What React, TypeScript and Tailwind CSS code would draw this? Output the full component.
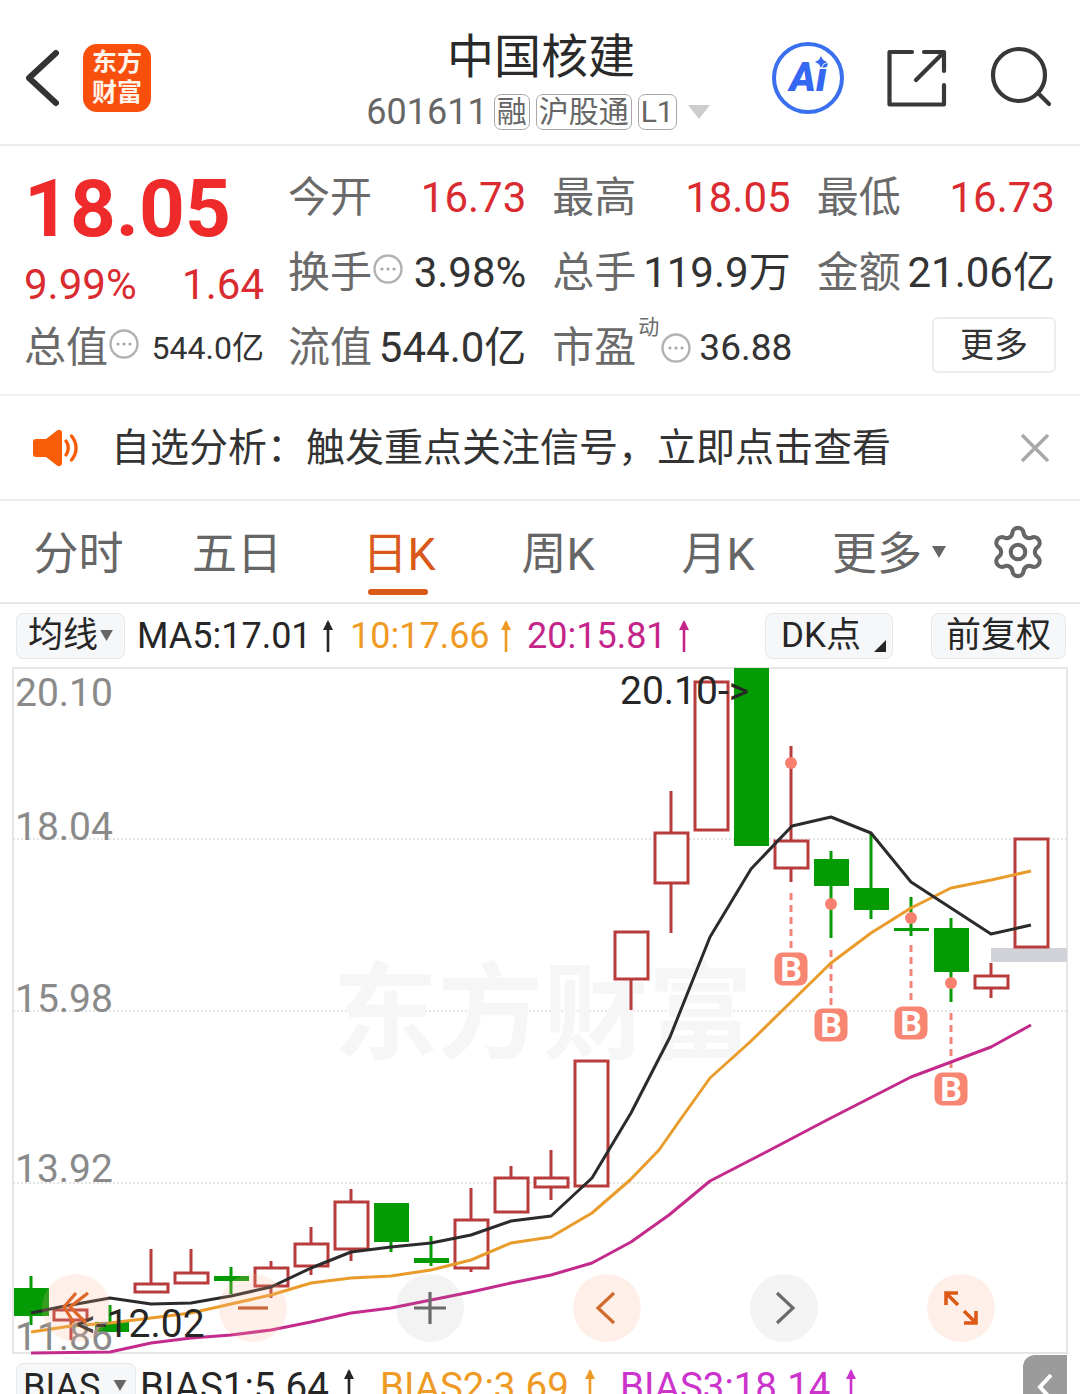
import { Settings } from "lucide-react";

type C = { x0: number; x1: number; top: number; bot: number; hi?: number; lo?: number; wx: number; up: boolean };

const candles: C[] = [
  { x0: 14, x1: 49, top: 1288, bot: 1316, hi: 1276, lo: 1325, wx: 31, up: false },
  { x0: 53, x1: 88, top: 1309, bot: 1321, lo: 1340, wx: 71, up: true },
  { x0: 95, x1: 129, top: 1322, bot: 1332, hi: 1305, wx: 110, up: false },
  { x0: 134, x1: 169, top: 1283, bot: 1293, hi: 1249, wx: 151, up: true },
  { x0: 174, x1: 209, top: 1272, bot: 1284, hi: 1249, wx: 191, up: true },
  { x0: 214, x1: 249, top: 1276, bot: 1281, hi: 1267, lo: 1294, wx: 231, up: false },
  { x0: 254, x1: 289, top: 1267, bot: 1287, hi: 1261, lo: 1298, wx: 271, up: true },
  { x0: 294, x1: 329, top: 1243, bot: 1267, hi: 1227, lo: 1275, wx: 311, up: true },
  { x0: 334, x1: 369, top: 1201, bot: 1250, hi: 1189, lo: 1261, wx: 351, up: true },
  { x0: 374, x1: 409, top: 1203, bot: 1242, lo: 1252, wx: 391, up: false },
  { x0: 414, x1: 449, top: 1258, bot: 1263, hi: 1236, lo: 1266, wx: 431, up: false },
  { x0: 454, x1: 489, top: 1219, bot: 1269, hi: 1188, lo: 1272, wx: 471, up: true },
  { x0: 494, x1: 529, top: 1177, bot: 1213, hi: 1166, wx: 511, up: true },
  { x0: 534, x1: 569, top: 1177, bot: 1188, hi: 1150, lo: 1200, wx: 551, up: true },
  { x0: 574, x1: 609, top: 1060, bot: 1187, wx: 591, up: true },
  { x0: 614, x1: 649, top: 931, bot: 980, lo: 1010, wx: 631, up: true },
  { x0: 654, x1: 689, top: 832, bot: 884, hi: 791, lo: 933, wx: 671, up: true },
  { x0: 694, x1: 729, top: 681, bot: 831, wx: 711, up: true },
  { x0: 734, x1: 769, top: 668, bot: 846, wx: 751, up: false },
  { x0: 774, x1: 809, top: 840, bot: 869, hi: 746, lo: 882, wx: 791, up: true },
  { x0: 814, x1: 849, top: 859, bot: 886, hi: 851, lo: 938, wx: 831, up: false },
  { x0: 854, x1: 889, top: 888, bot: 910, hi: 833, lo: 919, wx: 871, up: false },
  { x0: 894, x1: 929, top: 928, bot: 931, hi: 897, lo: 936, wx: 911, up: false },
  { x0: 934, x1: 969, top: 928, bot: 972, hi: 918, lo: 1002, wx: 951, up: false },
  { x0: 974, x1: 1009, top: 975, bot: 989, hi: 963, lo: 998, wx: 991, up: true },
  { x0: 1014, x1: 1049, top: 838, bot: 948, wx: 1031, up: true },
];

const ma5 = "31,1313 60,1307 110,1298 151,1304 191,1303 231,1296 271,1287 311,1268 351,1252 391,1247 431,1243 471,1235 511,1221 551,1216 592,1178 631,1113 670,1037 710,937 751,869 792,826 831,817 871,833 911,882 951,908 991,934 1031,925";
const ma10 = "31,1332 71,1326 110,1323 151,1318 191,1313 231,1304 271,1295 311,1283 351,1278 391,1276 431,1270 471,1260 511,1243 551,1237 592,1213 630,1180 659,1150 680,1120 710,1078 750,1042 791,1002 831,963 871,933 911,908 951,888 991,880 1031,871";
const ma20 = "31,1353 110,1352 151,1343 191,1338 231,1335 271,1330 311,1322 351,1313 391,1308 431,1300 471,1292 511,1283 551,1275 592,1263 631,1242 669,1215 710,1181 770,1150 827,1120 911,1077 951,1062 991,1047 1031,1025";

const marks = [
  { x: 791, dot: 763, d0: 893, d1: 950, b: 969 },
  { x: 831, dot: 904, d0: 950, d1: 1005, b: 1025 },
  { x: 911, dot: 918, d0: 945, d1: 1003, b: 1023 },
  { x: 951, dot: 983, d0: 1013, d1: 1070, b: 1089 },
];

const RED = "#b83c3c";
const GREEN = "#049b04";

function Chart() {
  return (
    <svg viewBox="12 667 1056 688" className="block h-[688px] w-[1056px]" fontFamily="Roboto, sans-serif">
      <rect x="13" y="668" width="1054" height="685" fill="none" stroke="#e6e6e6" strokeWidth="2" />
      {[839, 1011, 1183].map((y) => (
        <line key={y} x1="13" x2="1067" y1={y} y2={y} stroke="#dcdcdc" strokeWidth="1.5" strokeDasharray="2 2" />
      ))}
      <text x="333" y="1050" fontSize="105" fontWeight="700" fill="#f6f6f6" fontFamily="'Noto Sans CJK SC', sans-serif">
        东方财富
      </text>
      <rect x="991" y="948" width="76" height="14" fill="#d1d3d8" />
      {candles.map((c, i) => {
        const col = c.up ? RED : GREEN;
        return (
          <g key={i}>
            {c.hi !== undefined && <line x1={c.wx} x2={c.wx} y1={c.hi} y2={c.top} stroke={col} strokeWidth="3" />}
            {c.lo !== undefined && <line x1={c.wx} x2={c.wx} y1={c.bot} y2={c.lo} stroke={col} strokeWidth="3" />}
            {c.up ? (
              <rect x={c.x0 + 1} y={c.top + 1} width={c.x1 - c.x0 - 2} height={c.bot - c.top - 2} fill="#fff" stroke={col} strokeWidth="3" />
            ) : (
              <rect x={c.x0} y={c.top} width={c.x1 - c.x0} height={c.bot - c.top} fill={col} />
            )}
          </g>
        );
      })}
      {marks.map((m) => (
        <g key={m.x}>
          <circle cx={m.x} cy={m.dot} r="6" fill="#f8806f" />
          <line x1={m.x} x2={m.x} y1={m.d0} y2={m.d1} stroke="#f0847a" strokeWidth="3" strokeDasharray="7 5" />
        </g>
      ))}
      <polyline points={ma20} fill="none" stroke="#c42a8c" strokeWidth="3" strokeLinejoin="round" />
      <polyline points={ma10} fill="none" stroke="#e99c2c" strokeWidth="3" strokeLinejoin="round" />
      <polyline points={ma5} fill="none" stroke="#2b2b2b" strokeWidth="3" strokeLinejoin="round" />
      {marks.map((m) => (
        <g key={m.x}>
          <rect x={m.x - 16.5} y={m.b - 16.5} width="33" height="33" rx="8" fill="#f98672" />
          <text x={m.x} y={m.b + 12} textAnchor="middle" fontSize="34" fontWeight="700" fill="#fff">
            B
          </text>
        </g>
      ))}
      {[
        ["20.10", 706],
        ["18.04", 840],
        ["15.98", 1012],
        ["13.92", 1182],
        ["11.86", 1350],
      ].map(([t, y]) => (
        <text key={t} x="15" y={y} fontSize="39" fill="#8a8a8a">
          {t}
        </text>
      ))}
      <text x="620" y="704" fontSize="39" fill="#262626">
        20.10-&gt;
      </text>
      <text x="76" y="1337" fontSize="39" fill="#262626">
        &lt;-12.02
      </text>
    </svg>
  );
}

function Info({ x }: { x?: string }) {
  return (
    <svg viewBox="0 0 30 30" className={`h-[30px] w-[30px] shrink-0 ${x ?? ""}`}>
      <circle cx="15" cy="15" r="13.5" fill="none" stroke="#b2b2b2" strokeWidth="2.4" />
      <circle cx="9" cy="15" r="1.6" fill="#a8a8a8" />
      <circle cx="15" cy="15" r="1.6" fill="#a8a8a8" />
      <circle cx="21" cy="15" r="1.6" fill="#a8a8a8" />
    </svg>
  );
}

function Up({ c }: { c: string }) {
  return (
    <svg viewBox="0 0 14 34" className="h-[34px] w-[14px] shrink-0">
      <path d="M7 33V3" stroke={c} strokeWidth="2.6" fill="none" />
      <path d="M2 11 7 1l5 10z" fill={c} />
    </svg>
  );
}

function Badge({ children }: { children: string }) {
  return (
    <span className="flex h-[36px] items-center justify-center rounded-[7px] border border-[#a8a8a8] px-[2px] text-[30px] leading-none text-[#666]">
      {children}
    </span>
  );
}

function Stat({ label, value, red, info }: { label: React.ReactNode; value: string; red?: boolean; info?: boolean }) {
  return (
    <div className="flex h-[75px] items-center justify-between">
      <div className="flex items-center">
        <span className="text-[42px] leading-none text-[#6a6a6a]">{label}</span>
        {info && <Info x="ml-[1px] -mt-[8px]" />}
      </div>
      <span className={`text-[42px] leading-none ${red ? "text-[#d92b30]" : "text-[#333]"}`}>{value}</span>
    </div>
  );
}

function Tab({ w, children, active }: { w: string; children: React.ReactNode; active?: boolean }) {
  return (
    <div className={`relative flex h-full items-center justify-center pt-[6px] text-[45px] leading-none ${w} ${active ? "text-[#d9581a]" : "text-[#666]"}`}>
      {children}
    </div>
  );
}

function Pill({ className, children }: { className: string; children: React.ReactNode }) {
  return (
    <div className={`flex shrink-0 items-center rounded-[7px] border border-[#e6e7ea] bg-[#f6f7f9] text-[#262626] ${className}`}>
      {children}
    </div>
  );
}

function Round({ gray, children }: { gray?: boolean; children: React.ReactNode }) {
  return (
    <div className={`flex h-[68px] w-[68px] items-center justify-center rounded-full ${gray ? "bg-[#8a8a8a]/10" : "bg-[#f8b48a]/20"}`}>
      <svg viewBox="0 0 40 40" className="h-[40px] w-[40px]" fill="none" strokeWidth="3.2">
        {children}
      </svg>
    </div>
  );
}

export default function App() {
  return (
    <div className="h-[1394px] w-[1080px] overflow-hidden bg-white [font-family:Roboto,'Noto_Sans_CJK_SC',sans-serif]">
      {/* header */}
      <header className="flex h-[146px] items-start border-b-2 border-[#ececec]">
        <div className="flex h-full w-[341px] items-start pl-[26px] pt-[44px]">
          <svg viewBox="0 0 34 62" className="mt-[6px] h-[62px] w-[34px]">
            <path d="M30 3 3 28l27 25" fill="none" stroke="#333" strokeWidth="6" strokeLinecap="round" strokeLinejoin="round" />
          </svg>
          <div className="ml-[23px] flex h-[68px] w-[68px] flex-col items-center justify-center rounded-[14px] bg-[#f84f0c] text-[25px] font-bold leading-[30px] text-[#fff3ea]">
            <span>东方</span>
            <span>财富</span>
          </div>
        </div>
        <div className="flex w-[400px] flex-col items-center pt-[30px]">
          <div className="text-[47px] leading-[54px] text-[#2a2a2a]">中国核建</div>
          <div className="mt-[9px] flex h-[38px] -translate-x-[3px] items-center gap-[6px]">
            <span className="text-[36px] leading-none text-[#666]">601611</span>
            <Badge>融</Badge>
            <Badge>沪股通</Badge>
            <Badge>L1</Badge>
            <svg viewBox="0 0 22 14" className="ml-[5px] h-[14px] w-[22px]">
              <path d="M0 0h22L11 14z" fill="#cdcdcd" />
            </svg>
          </div>
        </div>
        <div className="flex h-full flex-1 items-start pl-[31px] pt-[42px]">
          <div className="relative flex h-[72px] w-[72px] items-center justify-center rounded-full border-[4px] border-[#3a6ff0] text-[#3568f2]">
            <span className="text-[40px] font-black italic leading-none">Ai</span>
            <svg viewBox="0 0 12 12" className="absolute right-[12px] top-[9px] h-[14px] w-[14px]">
              <path d="M6 0 8 4l4 2-4 2-2 4-2-4-4-2 4-2z" fill="#3568f2" stroke="#fff" strokeWidth="0.8" />
            </svg>
          </div>
          <svg viewBox="886 48 62 62" className="ml-[42px] mt-[6px] h-[62px] w-[62px]" fill="none" stroke="#383838" strokeWidth="4.2" strokeLinecap="round" strokeLinejoin="round">
            <path d="M912 52H889.5V104.5H944V85" />
            <path d="M916 80 943 53M924 52H944V71" />
          </svg>
          <svg viewBox="988 44 66 66" className="ml-[40px] mt-[2px] h-[66px] w-[66px]" fill="none" stroke="#383838" strokeWidth="4.2" strokeLinecap="round">
            <circle cx="1019" cy="75" r="26" />
            <path d="M1039 94 1049 104" />
          </svg>
        </div>
      </header>

      {/* quote */}
      <section className="flex h-[250px] border-b-2 border-[#f0f0f0] pl-[24px] pt-[14px]">
        <div className="w-[240px] shrink-0">
          <div className="text-[80px] font-bold leading-[98px] text-[#ee2a2a]">18.05</div>
          <div className="mt-[3px] flex h-[48px] items-center justify-between text-[42px] leading-none text-[#d92b30]">
            <span>9.99%</span>
            <span>1.64</span>
          </div>
          <div className="mt-[9px] flex h-[60px] items-center justify-between">
            <div className="flex items-center">
              <span className="text-[42px] leading-none text-[#6a6a6a]">总值</span>
              <Info x="ml-[1px] -mt-[8px]" />
            </div>
            <span className="text-[32px] leading-none text-[#333]">544.0亿</span>
          </div>
        </div>
        <div className="ml-[24px] grid w-[767px] grid-cols-3 gap-x-[26px] [grid-auto-rows:75px]">
          <Stat label="今开" value="16.73" red />
          <Stat label="最高" value="18.05" red />
          <Stat label="最低" value="16.73" red />
          <Stat label="换手" value="3.98%" info />
          <Stat label="总手" value="119.9万" />
          <Stat label="金额" value="21.06亿" />
          <Stat label="流值" value="544.0亿" />
          <div className="flex h-[75px] items-center">
            <span className="relative shrink-0 whitespace-nowrap text-[42px] leading-none text-[#6a6a6a]">
              市盈
              <span className="absolute -right-[23px] -top-[10px] text-[21px] leading-none">动</span>
            </span>
            <Info x="ml-[25px]" />
            <span className="ml-[8px] text-[37px] leading-none text-[#333]">36.88</span>
          </div>
          <div className="flex h-[75px] items-center justify-end pb-[5px]">
            <div className="-mr-[1px] flex h-[56px] w-[124px] items-center justify-center rounded-[6px] border-2 border-[#ececec] text-[34px] leading-none text-[#333]">
              更多
            </div>
          </div>
        </div>
      </section>

      {/* notice */}
      <section className="flex h-[105px] items-center border-b-2 border-[#ececec] pl-[33px]">
        <svg viewBox="0 0 46 38" className="h-[38px] w-[46px]">
          <path d="M3 10h10L24 1.5c2-1.5 5-.5 5 2.5v30c0 3-3 4-5 2.5L13 28H3c-2 0-3-1-3-3V13c0-2 1-3 3-3z" fill="#f75d07" />
          <path d="M33 12c3 4 3 10 0 14M38.500 7c6 7 6 17 0 24" fill="none" stroke="#f75d07" strokeWidth="3.400" strokeLinecap="round" />
        </svg>
        <span className="ml-[32px] whitespace-nowrap pt-[2px] text-[39px] leading-none text-[#333]">自选分析：触发重点关注信号，立即点击查看</span>
        <svg viewBox="0 0 30 30" className="ml-[129px] h-[30px] w-[30px]">
          <path d="M2 2 28 28M28 2 2 28" stroke="#a9a9a9" strokeWidth="3.500" />
        </svg>
      </section>

      {/* tabs */}
      <nav className="flex h-[103px] items-center border-b-2 border-[#e8e8e8]">
        <Tab w="w-[157px]">分时</Tab>
        <Tab w="w-[160px]">五日</Tab>
        <Tab w="w-[164px]" active>
          日K
          <span className="absolute bottom-[7px] left-[51px] h-[6px] w-[60px] rounded-full bg-[#d95a16]" />
        </Tab>
        <Tab w="w-[154px]">周K</Tab>
        <Tab w="w-[166px]">月K</Tab>
        <Tab w="w-[176px]">
          更多
          <svg viewBox="0 0 14 12" className="ml-[10px] -mt-[6px] h-[12px] w-[14px]">
            <path d="M0 0h14L7 12z" fill="#666" />
          </svg>
        </Tab>
        <Settings className="ml-[12px] h-[58px] w-[58px] text-[#666]" strokeWidth={1.7} />
      </nav>

      {/* MA legend */}
      <div className="flex h-[63px] items-center pl-[16px] text-[36px] leading-none">
        <Pill className="h-[46px] w-[109px] justify-center text-[35px] leading-none">
          均线
          <svg viewBox="0 0 14 12" className="ml-[2px] h-[11px] w-[13px]">
            <path d="M0 0h14L7 12z" fill="#666" />
          </svg>
        </Pill>
        <span className="ml-[12px] w-[172px] text-[#262626]">MA5:17.01</span>
        <span className="ml-[12px]">
          <Up c="#262626" />
        </span>
        <span className="ml-[15px] w-[138px] text-[#ee9a24]">10:17.66</span>
        <span className="ml-[11px]">
          <Up c="#ee9a24" />
        </span>
        <span className="ml-[14px] w-[136px] text-[#c5248a]">20:15.81</span>
        <span className="ml-[14px]">
          <Up c="#c5248a" />
        </span>
        <Pill className="relative ml-[74px] h-[46px] w-[128px] justify-center pr-[16px] text-[35px] leading-none">
          DK点
          <svg viewBox="0 0 12 12" className="absolute bottom-[6px] right-[6px] h-[12px] w-[12px]">
            <path d="M12 0V12H0z" fill="#262626" />
          </svg>
        </Pill>
        <Pill className="ml-[38px] h-[46px] w-[135px] justify-center text-[35px] leading-none">前复权</Pill>
      </div>

      {/* chart */}
      <div className="relative ml-[12px] w-[1056px]">
        <Chart />
        <div className="absolute left-[30px] top-[607px] flex gap-[109px]">
          <Round>
            <path d="M20 5 8 19l10 16M32 5 14 19l16 16" stroke="#e0672a" />
          </Round>
          <Round>
            <path d="M5 20H35" stroke="#c8683a" />
          </Round>
          <Round gray>
            <path d="M4 20H36M20 4V36" stroke="#6a6a6a" />
          </Round>
          <Round>
            <path d="M27 5 11 20l16 15" stroke="#d06a2c" />
          </Round>
          <Round gray>
            <path d="M13 5 29 20 13 35" stroke="#6a6a6a" />
          </Round>
          <Round>
            <path d="M5 5 17 17M5 17V5H17M35 35 23 23M35 23V35H23" stroke="#dd5a16" strokeWidth="3.600" />
          </Round>
        </div>
      </div>

      {/* BIAS legend */}
      <div className="relative flex h-[40px] items-start pl-[16px] pt-[13px] text-[38.5px] leading-none">
        <div className="-mt-[5px] flex h-[60px] w-[120px] shrink-0 items-start rounded-[7px] border border-[#e6e7ea] bg-[#f6f7f9] pl-[6px] pt-[5px] text-[36px] text-[#262626]">
          BIAS
          <svg viewBox="0 0 14 12" className="ml-[13px] mt-[11px] h-[11px] w-[14px]">
            <path d="M0 0h14L7 12z" fill="#666" />
          </svg>
        </div>
        <span className="ml-[4px] w-[188px] text-[#262626]">BIAS1:5.64</span>
        <span className="ml-[14px]">
          <Up c="#262626" />
        </span>
        <span className="ml-[24px] w-[188px] text-[#ee9a24]">BIAS2:3.69</span>
        <span className="ml-[15px]">
          <Up c="#ee9a24" />
        </span>
        <span className="ml-[23px] w-[210px] text-[#cc33cc]">BIAS3:18.14</span>
        <span className="ml-[14px]">
          <Up c="#cc33cc" />
        </span>
        <div className="absolute left-[1023px] top-0 flex h-[60px] w-[44px] justify-center rounded-tl-[12px] bg-[#9b9b9b] pt-[18px]">
          <svg viewBox="0 0 16 28" className="h-[28px] w-[16px]">
            <path d="M14 2 3 14l11 12" fill="none" stroke="#fff" strokeWidth="4" />
          </svg>
        </div>
      </div>
    </div>
  );
}
